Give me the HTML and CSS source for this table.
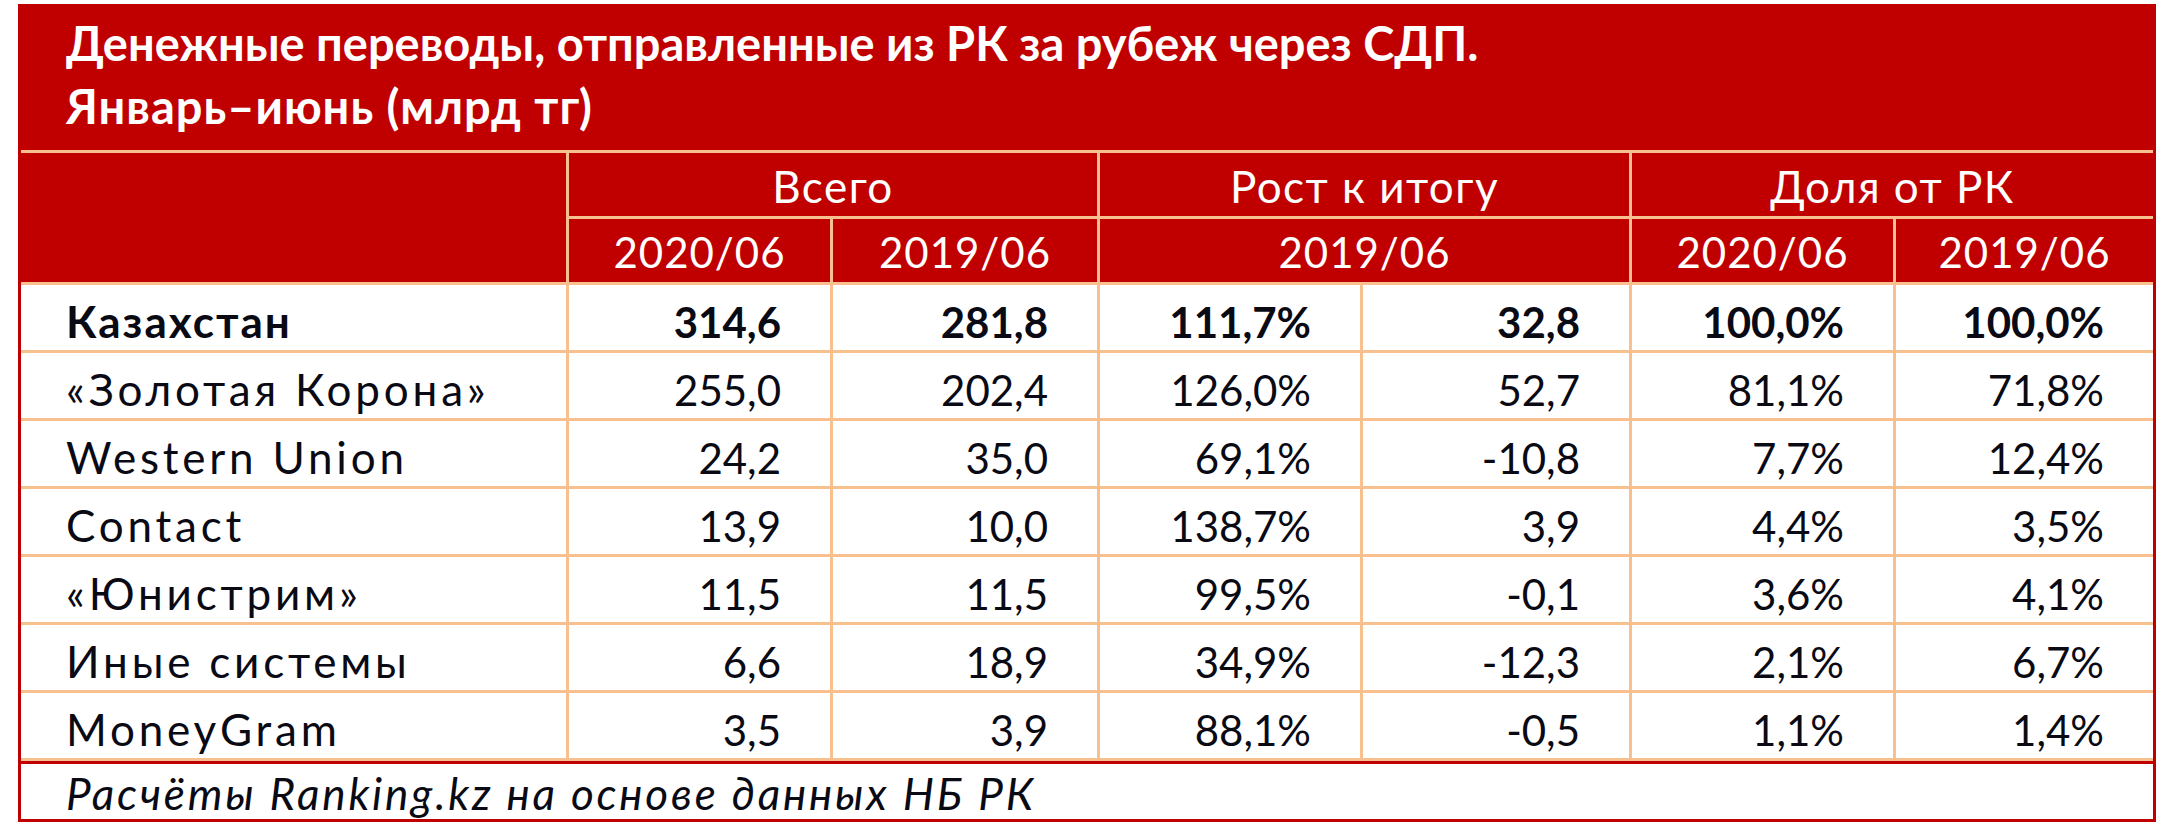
FILE: index.html
```html
<!DOCTYPE html>
<html lang="ru">
<head>
<meta charset="utf-8">
<title>Денежные переводы</title>
<link rel="stylesheet" href="styles.css">
</head>
<body>
<div class="sheet">
  <div class="title">
    <div class="title-line">Денежные переводы, отправленные из РК за рубеж через СДП.</div>
    <div class="title-line second">Январь–июнь (млрд тг)</div>
  </div>
  <div class="grid">
    <div class="cell head corner"></div>
    <div class="cell head group span2">Всего</div>
    <div class="cell head group span2">Рост к итогу</div>
    <div class="cell head group span2">Доля от РК</div>

    <div class="cell head">2020/06</div>
    <div class="cell head">2019/06</div>
    <div class="cell head span2">2019/06</div>
    <div class="cell head">2020/06</div>
    <div class="cell head">2019/06</div>

    <div class="cell name bold">Казахстан</div>
    <div class="cell num bold">314,6</div>
    <div class="cell num bold">281,8</div>
    <div class="cell num bold">111,7%</div>
    <div class="cell num bold">32,8</div>
    <div class="cell num bold">100,0%</div>
    <div class="cell num bold">100,0%</div>

    <div class="cell name">«Золотая Корона»</div>
    <div class="cell num">255,0</div>
    <div class="cell num">202,4</div>
    <div class="cell num">126,0%</div>
    <div class="cell num">52,7</div>
    <div class="cell num">81,1%</div>
    <div class="cell num">71,8%</div>

    <div class="cell name">Western Union</div>
    <div class="cell num">24,2</div>
    <div class="cell num">35,0</div>
    <div class="cell num">69,1%</div>
    <div class="cell num">-10,8</div>
    <div class="cell num">7,7%</div>
    <div class="cell num">12,4%</div>

    <div class="cell name">Contact</div>
    <div class="cell num">13,9</div>
    <div class="cell num">10,0</div>
    <div class="cell num">138,7%</div>
    <div class="cell num">3,9</div>
    <div class="cell num">4,4%</div>
    <div class="cell num">3,5%</div>

    <div class="cell name">«Юнистрим»</div>
    <div class="cell num">11,5</div>
    <div class="cell num">11,5</div>
    <div class="cell num">99,5%</div>
    <div class="cell num">-0,1</div>
    <div class="cell num">3,6%</div>
    <div class="cell num">4,1%</div>

    <div class="cell name">Иные системы</div>
    <div class="cell num">6,6</div>
    <div class="cell num">18,9</div>
    <div class="cell num">34,9%</div>
    <div class="cell num">-12,3</div>
    <div class="cell num">2,1%</div>
    <div class="cell num">6,7%</div>

    <div class="cell name">MoneyGram</div>
    <div class="cell num">3,5</div>
    <div class="cell num">3,9</div>
    <div class="cell num">88,1%</div>
    <div class="cell num">-0,5</div>
    <div class="cell num">1,1%</div>
    <div class="cell num">1,4%</div>
  </div>
  <div class="source">Расчёты Ranking.kz на основе данных НБ РК</div>
</div>
</body>
</html>
```

FILE: styles.css
```css
html, body {
  margin: 0;
  padding: 0;
  background: #ffffff;
}

body {
  padding: 4px 0 0 18px;
  font-family: Lato, "Noto Sans", sans-serif;
  color: #0a0a14;
}

.sheet {
  box-sizing: border-box;
  width: 2138px;
  border: 3px solid #c00000;
  background: #c00000;
}

.title {
  height: 143px;
  box-sizing: border-box;
  padding: 5px 0 0 45px;
  color: #ffffff;
  font-weight: 700;
  font-size: 47px;
  line-height: 63px;
}

.title .second {
  letter-spacing: 1px;
}

.grid {
  display: grid;
  grid-template-columns: 545px 261px 264px 260px 266px 261px 257px;
  grid-template-rows: 63px 63px repeat(7, 65px);
  gap: 3px;
  background: #f9c08f;
  border-top: 3px solid #f9c08f;
  border-bottom: 3px solid #f9c08f;
}

.cell {
  display: flex;
  align-items: center;
  font-size: 42px;
  line-height: 1;
  background: #ffffff;
  white-space: nowrap;
}

.head {
  background: #c00000;
  color: #ffffff;
  justify-content: center;
  padding-top: 3px;
  box-sizing: border-box;
  letter-spacing: 1px;
}

.head.group {
  font-size: 44px;
  letter-spacing: 1.5px;
}

.corner {
  grid-row: span 2;
}

.span2 {
  grid-column: span 2;
}

.name {
  padding: 7px 0 0 45px;
  box-sizing: border-box;
  font-size: 44px;
  letter-spacing: 3.8px;
}

.name.bold {
  letter-spacing: 2px;
}

.num {
  justify-content: flex-end;
  padding: 8px 49px 0 0;
  box-sizing: border-box;
}

.bold {
  font-weight: 700;
}

.source {
  height: 58px;
  box-sizing: border-box;
  border-top: 3px solid #c00000;
  background: #ffffff;
  padding: 5px 0 0 45px;
  font-size: 44px;
  font-style: italic;
  letter-spacing: 2.8px;
  line-height: 48px;
}
```
